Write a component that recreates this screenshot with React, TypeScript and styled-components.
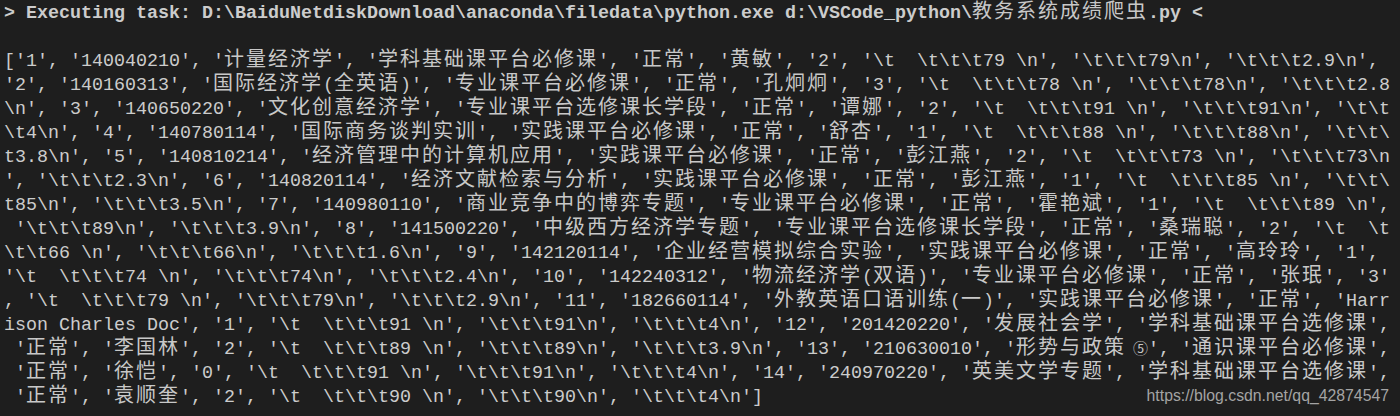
import React from "react";
import styled, { createGlobalStyle } from "styled-components";

const Global = createGlobalStyle`
  html, body {
    margin: 0;
    padding: 0;
    background: #1e1e1e;
  }
  body {
    width: 1400px;
    height: 416px;
    overflow: hidden;
  }
`;

const Terminal = styled.div`
  position: relative;
  box-sizing: border-box;
  width: 1400px;
  height: 416px;
  padding: 0 0 0 4px;
  background: #1e1e1e;
  color: #cccccc;
  font-family: "Liberation Mono", "DejaVu Sans Mono", monospace;
  font-size: 18.33px;
  overflow: hidden;
`;

const Line = styled.div<{ $bold?: boolean }>`
  height: 24px;
  line-height: 24px;
  white-space: pre;
  font-weight: ${(p) => (p.$bold ? 700 : 400)};
`;

const Wide = styled.span`
  font-family: "Noto Sans CJK SC", "Noto Sans CJK JP", sans-serif;
  font-size: 20px;
  letter-spacing: 2px;
  line-height: 1;
  font-weight: 400;
  color: #c8c8c8;
`;

const Circled = styled.span`
  display: inline-block;
  width: 22px;
  text-align: right;
  font-family: "Noto Sans CJK SC", "DejaVu Sans", sans-serif;
  font-size: 15px;
  line-height: 1;
  color: #c8c8c8;
`;

const Watermark = styled.span`
  position: absolute;
  right: 11px;
  top: 388px;
  font-family: "Liberation Sans", Arial, sans-serif;
  font-size: 15.8px;
  line-height: 15.8px;
  color: #a4a4a4;
  white-space: nowrap;
`;

const BS = "\\";

const header = String.raw`> Executing task: D:\BaiduNetdiskDownload\anaconda\filedata\python.exe d:\VSCode_python\教务系统成绩爬虫.py <`;

const lines: string[] = [
  String.raw`['1', '140040210', '计量经济学', '学科基础课平台必修课', '正常', '黄敏', '2', '\t  \t\t\t79 \n', '\t\t\t79\n', '\t\t\t2.9\n',`,
  String.raw`'2', '140160313', '国际经济学(全英语)', '专业课平台必修课', '正常', '孔炯炯', '3', '\t  \t\t\t78 \n', '\t\t\t78\n', '\t\t\t2.8`,
  String.raw`\n', '3', '140650220', '文化创意经济学', '专业课平台选修课长学段', '正常', '谭娜', '2', '\t  \t\t\t91 \n', '\t\t\t91\n', '\t\t`,
  String.raw`\t4\n', '4', '140780114', '国际商务谈判实训', '实践课平台必修课', '正常', '舒杏', '1', '\t  \t\t\t88 \n', '\t\t\t88\n', '\t\t` + BS,
  String.raw`t3.8\n', '5', '140810214', '经济管理中的计算机应用', '实践课平台必修课', '正常', '彭江燕', '2', '\t  \t\t\t73 \n', '\t\t\t73\n`,
  String.raw`', '\t\t\t2.3\n', '6', '140820114', '经济文献检索与分析', '实践课平台必修课', '正常', '彭江燕', '1', '\t  \t\t\t85 \n', '\t\t` + BS,
  String.raw`t85\n', '\t\t\t3.5\n', '7', '140980110', '商业竞争中的博弈专题', '专业课平台必修课', '正常', '霍艳斌', '1', '\t  \t\t\t89 \n',`,
  String.raw` '\t\t\t89\n', '\t\t\t3.9\n', '8', '141500220', '中级西方经济学专题', '专业课平台选修课长学段', '正常', '桑瑞聪', '2', '\t  \t`,
  String.raw`\t\t66 \n', '\t\t\t66\n', '\t\t\t1.6\n', '9', '142120114', '企业经营模拟综合实验', '实践课平台必修课', '正常', '高玲玲', '1',`,
  String.raw`'\t  \t\t\t74 \n', '\t\t\t74\n', '\t\t\t2.4\n', '10', '142240312', '物流经济学(双语)', '专业课平台必修课', '正常', '张珉', '3'`,
  String.raw`, '\t  \t\t\t79 \n', '\t\t\t79\n', '\t\t\t2.9\n', '11', '182660114', '外教英语口语训练(一)', '实践课平台必修课', '正常', 'Harr`,
  String.raw`ison Charles Doc', '1', '\t  \t\t\t91 \n', '\t\t\t91\n', '\t\t\t4\n', '12', '201420220', '发展社会学', '学科基础课平台选修课',`,
  String.raw` '正常', '李国林', '2', '\t  \t\t\t89 \n', '\t\t\t89\n', '\t\t\t3.9\n', '13', '210630010', '形势与政策⑤', '通识课平台必修课',`,
  String.raw` '正常', '徐恺', '0', '\t  \t\t\t91 \n', '\t\t\t91\n', '\t\t\t4\n', '14', '240970220', '英美文学专题', '学科基础课平台选修课',`,
  String.raw` '正常', '袁顺奎', '2', '\t  \t\t\t90 \n', '\t\t\t90\n', '\t\t\t4\n']`,
];

const WIDE_RE = /([\u2460-\u24FF]|[\u2E80-\u9FFF\uF900-\uFAFF\uFF00-\uFFEF]+)/;
const CIRCLED_RE = /^[\u2460-\u24FF]$/;

function renderText(text: string) {
  return text.split(WIDE_RE).map((part, i) => {
    if (i % 2 === 0) return <React.Fragment key={i}>{part}</React.Fragment>;
    if (CIRCLED_RE.test(part)) return <Circled key={i}>{part}</Circled>;
    return <Wide key={i}>{part}</Wide>;
  });
}

export default function App() {
  return (
    <>
      <Global />
      <Terminal>
        <Line $bold>{renderText(header)}</Line>
        <Line> </Line>
        {lines.map((l, i) => (
          <Line key={i}>{renderText(l)}</Line>
        ))}
        <Watermark>https://blog.csdn.net/qq_42874547</Watermark>
      </Terminal>
    </>
  );
}
